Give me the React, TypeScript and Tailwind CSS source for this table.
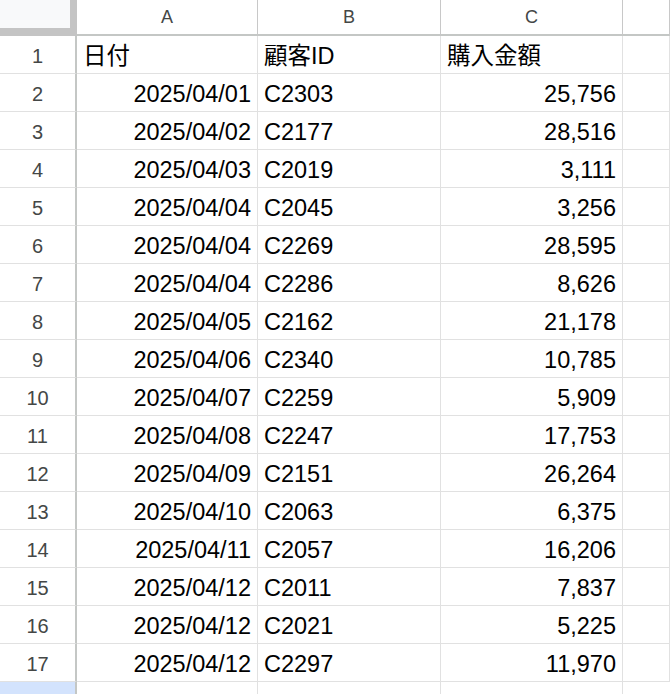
import React from 'react';

const rows: [string, string, string][] = [
  ['2025/04/01', 'C2303', '25,756'],
  ['2025/04/02', 'C2177', '28,516'],
  ['2025/04/03', 'C2019', '3,111'],
  ['2025/04/04', 'C2045', '3,256'],
  ['2025/04/04', 'C2269', '28,595'],
  ['2025/04/04', 'C2286', '8,626'],
  ['2025/04/05', 'C2162', '21,178'],
  ['2025/04/06', 'C2340', '10,785'],
  ['2025/04/07', 'C2259', '5,909'],
  ['2025/04/08', 'C2247', '17,753'],
  ['2025/04/09', 'C2151', '26,264'],
  ['2025/04/10', 'C2063', '6,375'],
  ['2025/04/11', 'C2057', '16,206'],
  ['2025/04/12', 'C2011', '7,837'],
  ['2025/04/12', 'C2021', '5,225'],
  ['2025/04/12', 'C2297', '11,970'],
];

const grid = 'grid grid-cols-[77px_181px_183px_182px_1fr]';
const rowHead =
  'flex items-center justify-center pt-[2px] border-r-2 border-b border-r-[#c4c7c5] border-b-[#e1e1e1] text-[20px] text-[#444746]';
const cell =
  'flex items-center border-r border-b border-[#e1e1e1] px-[6px] pt-[5px] text-[23.5px] text-black whitespace-nowrap overflow-hidden';

export default function App() {
  return (
    <div
      className="w-[670px] h-[694px] overflow-hidden bg-white"
      style={{ fontFamily: '"Liberation Sans", Arial, "Noto Sans CJK JP", sans-serif' }}
    >
      {/* column letters */}
      <div className={`${grid} h-[36px]`}>
        <div className="bg-[#f8f9fa] border-r-[7px] border-b-[8px] border-[#c4c4c4]" />
        {['A', 'B', 'C', ''].map((l, i) => (
          <div
            key={i}
            className="flex items-center justify-center pt-[1px] border-b-2 border-r border-b-[#c4c7c5] border-r-[#c8c8c8] text-[18px] text-[#444746]"
          >
            {l}
          </div>
        ))}
      </div>

      {/* header row */}
      <div className={`${grid} h-[38px]`}>
        <div className={rowHead}>1</div>
        <div className={cell}>日付</div>
        <div className={cell}>顧客ID</div>
        <div className={cell}>購入金額</div>
        <div className={cell} />
      </div>

      {rows.map((r, i) => (
        <div key={i} className={`${grid} h-[38px]`}>
          <div className={rowHead}>{i + 2}</div>
          <div className={`${cell} justify-end`}>{r[0]}</div>
          <div className={cell}>{r[1]}</div>
          <div className={`${cell} justify-end`}>{r[2]}</div>
          <div className={cell} />
        </div>
      ))}

      {/* next row, partially visible */}
      <div className={`${grid} h-[38px]`}>
        <div className="bg-[#d3e3fd] border-r-2 border-[#c4c7c5]" />
        <div className="border-r border-[#e1e1e1]" />
        <div className="border-r border-[#e1e1e1]" />
        <div className="border-r border-[#e1e1e1]" />
        <div />
      </div>
    </div>
  );
}
